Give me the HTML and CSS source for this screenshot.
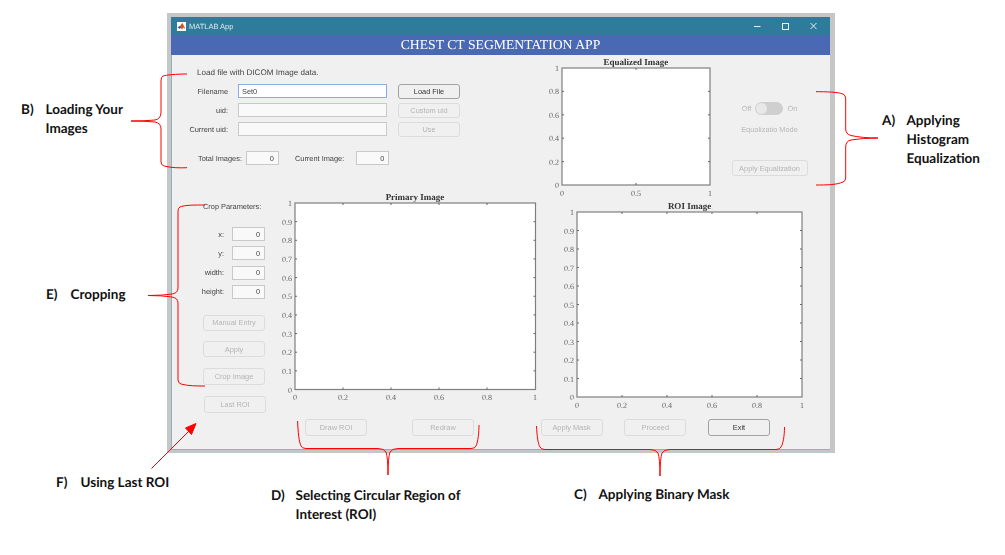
FILE: index.html
```html
<!DOCTYPE html>
<html lang="en">
<head>
    <meta charset="UTF-8">
    <title>Chest CT Segmentation App</title>
    <link rel="stylesheet" href="styles.css">
</head>
<body>
<div class="stage">

    <div class="window">
        <div class="titlebar">
            <svg class="app-icon" width="9" height="9" viewBox="0 0 9 9">
                <rect width="9" height="9" fill="#fff"/>
                <path d="M0.5 5.5 L3 4 L4.5 2 L5.5 1 L8.5 7 L6.5 5.5 L5 7.5 L3.5 5.5 Z" fill="#d9541e"/>
                <path d="M0.5 5.5 L3 4 L4 5 L3 7 Z" fill="#2a5fa0"/>
            </svg>
            <span class="app-name">MATLAB App</span>
            <svg class="win-controls" width="70" height="10" viewBox="0 0 70 10">
                <path d="M0 5.5H6.5" stroke="#e8f0f4" fill="none"/>
                <rect x="28.5" y="2.5" width="6" height="6" stroke="#e8f0f4" fill="none"/>
                <path d="M56.5 2L62.5 8M62.5 2L56.5 8" stroke="#e8f0f4" fill="none"/>
            </svg>
        </div>
        <div class="header">CHEST CT SEGMENTATION APP</div>

        <div class="main">
            <div class="col-left">
                <div class="load-panel">
                    <p class="load-hint">Load file with DICOM Image data.</p>
                    <div class="load-grid">
                        <label>Filename</label>
                        <input class="txt focus" type="text" value="Set0">
                        <button class="btn active">Load File</button>
                        <label>uid:</label>
                        <input class="txt" type="text" disabled>
                        <button class="btn" disabled>Custom uid</button>
                        <label>Current uid:</label>
                        <input class="txt" type="text" disabled>
                        <button class="btn" disabled>Use</button>
                    </div>
                    <div class="counters">
                        <label>Total Images:</label>
                        <input class="num" type="text" value="0" disabled>
                        <label class="second">Current Image:</label>
                        <input class="num" type="text" value="0" disabled>
                    </div>
                </div>

                <div class="lower-left">
                    <div class="crop-panel">
                        <p class="crop-title">Crop Parameters:</p>
                        <div class="crop-grid">
                            <label>x:</label><input class="num" type="text" value="0" disabled>
                            <label>y:</label><input class="num" type="text" value="0" disabled>
                            <label>width:</label><input class="num" type="text" value="0" disabled>
                            <label>height:</label><input class="num" type="text" value="0" disabled>
                        </div>
                        <div class="crop-buttons">
                            <button class="btn" disabled>Manual Entry</button>
                            <button class="btn" disabled>Apply</button>
                            <button class="btn crop-image" disabled>Crop Image</button>
                            <button class="btn last-roi" disabled>Last ROI</button>
                        </div>
                    </div>

                    <div class="primary">
                        <svg class="plot" width="260" height="212" viewBox="0 0 260 212">
                            <text class="plot-title" x="135" y="8">Primary Image</text>
                            <rect class="axes" x="15" y="11" width="240.5" height="186.5"/>
                            <path class="ticks" d="M15 29.65h2M15 48.3h2M15 66.95h2M15 85.6h2M15 104.25h2M15 122.9h2M15 141.55h2M15 160.2h2M15 178.85h2M255.5 29.65h-2M255.5 48.3h-2M255.5 66.95h-2M255.5 85.6h-2M255.5 104.25h-2M255.5 122.9h-2M255.5 141.55h-2M255.5 160.2h-2M255.5 178.85h-2M63 11v2M111 11v2M159 11v2M207 11v2M63 197.5v-2M111 197.5v-2M159 197.5v-2M207 197.5v-2"/>
                            <g class="ylabels">
                                <text x="12" y="14">1</text><text x="12" y="32.6">0.9</text><text x="12" y="51.3">0.8</text><text x="12" y="70">0.7</text><text x="12" y="88.6">0.6</text><text x="12" y="107.2">0.5</text><text x="12" y="125.9">0.4</text><text x="12" y="144.5">0.3</text><text x="12" y="163.2">0.2</text><text x="12" y="181.8">0.1</text><text x="12" y="200.5">0</text>
                            </g>
                            <g class="xlabels">
                                <text x="15" y="208">0</text><text x="63" y="208">0.2</text><text x="111" y="208">0.4</text><text x="159" y="208">0.6</text><text x="207" y="208">0.8</text><text x="255" y="208">1</text>
                            </g>
                        </svg>
                        <div class="primary-buttons">
                            <button class="btn" disabled>Draw ROI</button>
                            <button class="btn" disabled>Redraw</button>
                        </div>
                    </div>
                </div>
            </div>

            <div class="col-right">
                <div class="top-right">
                    <svg class="plot" width="168" height="145" viewBox="0 0 168 145">
                        <text class="plot-title" x="88" y="10">Equalized Image</text>
                        <rect class="axes" x="14" y="13" width="148" height="117"/>
                        <path class="ticks" d="M14 36.4h2M14 59.8h2M14 83.2h2M14 106.6h2M162 36.4h-2M162 59.8h-2M162 83.2h-2M162 106.6h-2M88 13v2M88 130v-2"/>
                        <g class="ylabels">
                            <text x="11" y="16">1</text><text x="11" y="39.4">0.8</text><text x="11" y="62.8">0.6</text><text x="11" y="86.2">0.4</text><text x="11" y="109.6">0.2</text><text x="11" y="133">0</text>
                        </g>
                        <g class="xlabels">
                            <text x="14" y="141">0</text><text x="88" y="141">0.5</text><text x="162" y="141">1</text>
                        </g>
                    </svg>
                    <div class="eq-panel">
                        <div class="toggle-row">
                            <span>Off</span>
                            <span class="toggle"><span class="knob"></span></span>
                            <span>On</span>
                        </div>
                        <div class="eq-label">Equalizatio Mode</div>
                        <button class="btn eq-btn" disabled>Apply Equalization</button>
                    </div>
                </div>

                <svg class="plot roi" width="250" height="212" viewBox="0 0 250 212">
                    <text class="plot-title" x="129.5" y="8.5">ROI Image</text>
                    <rect class="axes" x="17" y="12" width="225" height="185"/>
                    <path class="ticks" d="M17 30.5h2M17 49h2M17 67.5h2M17 86h2M17 104.5h2M17 123h2M17 141.5h2M17 160h2M17 178.5h2M242 30.5h-2M242 49h-2M242 67.5h-2M242 86h-2M242 104.5h-2M242 123h-2M242 141.5h-2M242 160h-2M242 178.5h-2M62 12v2M107 12v2M152 12v2M197 12v2M62 197v-2M107 197v-2M152 197v-2M197 197v-2"/>
                    <g class="ylabels">
                        <text x="14" y="15">1</text><text x="14" y="33.5">0.9</text><text x="14" y="52">0.8</text><text x="14" y="70.5">0.7</text><text x="14" y="89">0.6</text><text x="14" y="107.5">0.5</text><text x="14" y="126">0.4</text><text x="14" y="144.5">0.3</text><text x="14" y="163">0.2</text><text x="14" y="181.5">0.1</text><text x="14" y="200">0</text>
                    </g>
                    <g class="xlabels">
                        <text x="17" y="208">0</text><text x="62" y="208">0.2</text><text x="107" y="208">0.4</text><text x="152" y="208">0.6</text><text x="197" y="208">0.8</text><text x="242" y="208">1</text>
                    </g>
                </svg>

                <div class="right-buttons">
                    <button class="btn" disabled>Apply Mask</button>
                    <button class="btn" disabled>Proceed</button>
                    <button class="btn active">Exit</button>
                </div>
            </div>
        </div>
    </div>

    <!-- red callouts drawn over the screenshot -->
    <svg class="callouts" width="1005" height="555" viewBox="0 0 1005 555">
        <path d="M187 74C176 74 166 75 163 76Q161 77 161 81V112Q161 119 155 120Q145 121 131 121Q145 121 155 122Q161 123 161 129V162Q161 165 164 166C172 168 180 168 187 167.7"/>
        <path d="M205 205C195 205 184 205 180 207Q178 208 178 211V288Q178 293 172 294Q162 295.5 148 295.5Q162 295.5 172 297Q178 298 178 303V380Q178 383 181 384C188 386 197 386 205 386"/>
        <path d="M816 91.7C826 91.7 838 92 843 94Q845.7 95 845.7 99V129Q845.7 134 851 135.5Q862 138 878 138Q862 138 851 140Q845.7 141 845.7 147V178Q845.7 181 843 182C836 185 826 185 816 185"/>
        <path d="M297.6 421C298 432 299 442 301 446Q302 448.5 306 448.5H378Q384 448.5 386 452Q388 458 388 475Q388 458 390 452Q392 448.5 398 448.5H471Q475 448.5 476 446C478 442 479 432 479 425"/>
        <path d="M536.5 426C537 436 538 444 540 447Q541 449.5 545 449.5H650Q656 449.5 658 453Q660 459 660 476Q660 459 662 453Q664 449.5 670 449.5H776Q780 449.5 781 447C783 444 784.5 436 784.5 427"/>
        <path d="M151.5 468.5L190 430"/>
        <path class="arrowhead" d="M196 423.5L191.5 434.5L185.5 428Z"/>
    </svg>

    <div class="note note-b"><span class="tag">B)</span><span>Loading Your<br>Images</span></div>
    <div class="note note-a"><span class="tag">A)</span><span>Applying<br>Histogram<br>Equalization</span></div>
    <div class="note note-e"><span class="tag">E)</span><span>Cropping</span></div>
    <div class="note note-f"><span class="tag">F)</span><span>Using Last ROI</span></div>
    <div class="note note-d"><span class="tag">D)</span><span>Selecting Circular Region of<br>Interest (ROI)</span></div>
    <div class="note note-c"><span class="tag">C)</span><span>Applying Binary Mask</span></div>

</div>
</body>
</html>
```

FILE: styles.css
```css
* {
    box-sizing: border-box;
}
body {
    margin: 0;
    background: #fff;
    font-family: "Liberation Sans", Arial, sans-serif;
    text-rendering: geometricPrecision;
    overflow: hidden;
}
.stage {
    position: relative;
    width: 1005px;
    height: 555px;
}

/* app window */
.window {
    position: absolute;
    left: 167px;
    top: 13px;
    width: 668px;
    height: 440px;
    display: flex;
    flex-direction: column;
    border: solid #c6c6c6;
    border-width: 4px 5px 3px 4px;
    background: #f0f0f0;
    filter: blur(0.3px);
}
.titlebar {
    height: 18px;
    display: flex;
    align-items: center;
    padding-left: 6px;
    background: #2e7b9b;
    color: #dfe9ee;
    font-size: 7.5px;
}
.app-name {
    margin-left: 3px;
}
.win-controls {
    margin-left: auto;
    margin-right: 6px;
}
.header {
    height: 20px;
    background: #4a69b5;
    color: #fff;
    font-family: "Liberation Serif", "Times New Roman", serif;
    font-size: 13.7px;
    line-height: 20px;
    text-align: center;
}
.main {
    height: 395px;
    display: flex;
    border-left: 1px solid #8fb2bf;
    border-bottom: 1px solid #8fb2bf;
    font-size: 7.4px;
    color: #444;
}
.col-left {
    width: 368px;
}
.col-right {
    width: 290px;
}

/* controls */
label {
    white-space: nowrap;
}
.btn {
    height: 16px;
    width: 62px;
    padding: 0;
    border: 1px solid #dcdcdc;
    border-radius: 3px;
    background: #f0f0f0;
    color: #b4b4b4;
    font-family: inherit;
    font-size: 7.4px;
}
.btn.active {
    border: 1.5px solid #a2a2a2;
    color: #333;
}
.txt, .num {
    height: 14px;
    padding: 0 4px 0 3px;
    border: 1px solid #c9c9c9;
    background: #f9f9f9;
    color: #444;
    font-family: inherit;
    font-size: 7.4px;
}
.txt {
    width: 148.5px;
}
.num {
    width: 33px;
    text-align: right;
}
.txt.focus {
    border: 1px solid #8cabe6;
    background: #fff;
}

/* load panel */
.load-panel {
    height: 137px;
    padding-top: 13px;
}
.load-hint {
    margin: 0 0 6px 25px;
    font-size: 8.1px;
    line-height: 10px;
}
.load-grid {
    display: grid;
    grid-template-columns: 56px 148.5px 62px;
    grid-auto-rows: 14px;
    row-gap: 5px;
    column-gap: 10px;
    align-items: center;
}
.load-grid label {
    text-align: right;
}
.load-grid .btn {
    height: 15px;
    margin-left: 1.5px;
}
.counters {
    display: flex;
    align-items: center;
    margin: 15px 0 0 26px;
}
.counters label {
    margin-right: 4px;
}
.counters .second {
    margin-left: 16px;
    margin-right: 12px;
}

/* crop panel */
.lower-left {
    display: flex;
}
.crop-panel {
    width: 108px;
    padding-top: 10px;
}
.crop-title {
    margin: 0 0 15px 31px;
    line-height: 10px;
}
.crop-grid {
    display: grid;
    grid-template-columns: 52px 33px;
    grid-auto-rows: 14px;
    row-gap: 5.3px;
    column-gap: 8px;
    align-items: center;
}
.crop-grid label {
    text-align: right;
}
.crop-buttons {
    display: flex;
    flex-direction: column;
    gap: 10.5px;
    margin: 16px 0 0 31px;
}
.crop-buttons .crop-image {
    height: 17px;
}
.crop-buttons .last-roi {
    margin: 0.5px 0 0 1px;
    height: 17px;
}

/* plots */
.plot {
    display: block;
}
.plot text {
    font-family: "Liberation Serif", "Times New Roman", serif;
}
.plot-title {
    font-size: 9px;
    font-weight: bold;
    fill: #333;
    text-anchor: middle;
}
.axes {
    fill: #fff;
    stroke: #7f7f7f;
    stroke-width: 1.2;
}
.ticks {
    fill: none;
    stroke: #666;
    stroke-width: 1;
}
.ylabels, .xlabels {
    font-size: 8px;
    fill: #666;
}
.ylabels {
    text-anchor: end;
}
.xlabels {
    text-anchor: middle;
}

.primary-buttons {
    display: flex;
    gap: 45px;
    margin: 15px 0 0 25px;
}
.primary-buttons .btn, .right-buttons .btn {
    height: 17px;
}

/* right column */
.top-right {
    height: 145px;
    display: flex;
    padding-left: 8px;
}
.eq-panel {
    width: 107px;
    display: flex;
    flex-direction: column;
    align-items: center;
    padding-top: 47px;
    color: #b8b8b8;
}
.toggle-row {
    display: flex;
    align-items: center;
    gap: 4px;
    height: 13px;
}
.toggle {
    display: block;
    width: 28px;
    height: 13px;
    padding: 1px;
    border-radius: 7px;
    background: #cfcfcf;
}
.knob {
    display: block;
    width: 11px;
    height: 11px;
    border-radius: 50%;
    background: #e8e8e8;
}
.eq-label {
    margin-top: 10px;
    line-height: 10px;
}
.eq-btn {
    width: 76px;
    margin-top: 25px;
}
.roi {
    margin-left: 20px;
}
.right-buttons {
    display: flex;
    gap: 21.75px;
    margin: 7px 0 0 0.5px;
}

/* callouts */
.callouts {
    position: absolute;
    left: 0;
    top: 0;
    pointer-events: none;
}
.callouts path {
    fill: none;
    stroke: #f00;
    stroke-width: 1;
}
.callouts .arrowhead {
    fill: #f00;
}
.note {
    position: absolute;
    display: flex;
    font-family: Lato, "Liberation Sans", sans-serif;
    font-size: 13.5px;
    font-weight: bold;
    line-height: 19px;
    color: #111;
}
.tag {
    width: 24.5px;
}
.note-b { left: 21px; top: 100px; }
.note-a { left: 882px; top: 111px; }
.note-e { left: 46px; top: 285px; }
.note-f { left: 56px; top: 473px; }
.note-d { left: 271px; top: 486px; }
.note-c { left: 574px; top: 485px; }
```
